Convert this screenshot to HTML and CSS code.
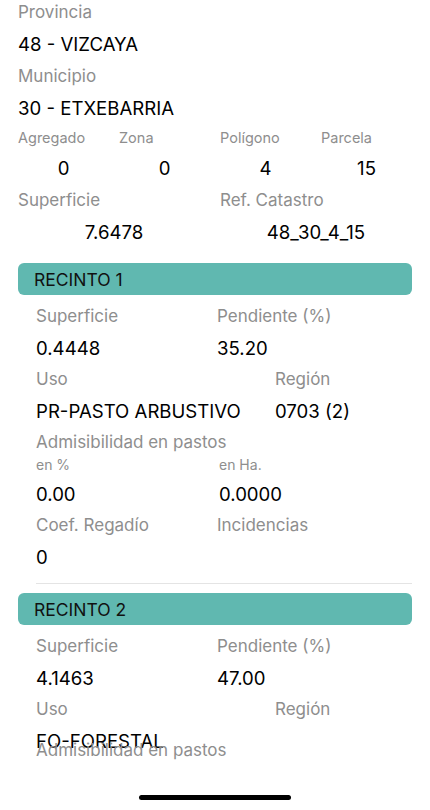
FILE: index.html
```html
<html>
  <head>
    <title>Parcela</title>
    <link rel="stylesheet" href="styles.css">
  </head>
  <body>
    <div id="screen">
      <div class="parcel">
        <p class="label">Provincia</p>
        <p class="value">48 - VIZCAYA</p>
        <p class="label">Municipio</p>
        <p class="value">30 - ETXEBARRIA</p>
        <div class="grid4">
          <p class="small">Agregado</p>
          <p class="small">Zona</p>
          <p class="small">Polígono</p>
          <p class="small">Parcela</p>
          <p class="value center">0</p>
          <p class="value center">0</p>
          <p class="value center">4</p>
          <p class="value center">15</p>
        </div>
        <div class="grid2">
          <p class="label">Superficie</p>
          <p class="label">Ref. Catastro</p>
          <p class="value center">7.6478</p>
          <p class="value center">48_30_4_15</p>
        </div>
      </div>

      <div class="recinto">
        <div class="head">RECINTO 1</div>
        <div class="body">
          <div class="pair">
            <p class="label">Superficie</p>
            <p class="label">Pendiente (%)</p>
            <p class="value">0.4448</p>
            <p class="value">35.20</p>
          </div>
          <div class="pair wide">
            <p class="label">Uso</p>
            <p class="label">Región</p>
            <p class="value">PR-PASTO ARBUSTIVO</p>
            <p class="value">0703 (2)</p>
          </div>
          <p class="label tight">Admisibilidad en pastos</p>
          <div class="pair sub">
            <p class="tiny">en %</p>
            <p class="tiny">en Ha.</p>
            <p class="value spaced">0.00</p>
            <p class="value spaced">0.0000</p>
          </div>
          <div class="pair">
            <p class="label">Coef. Regadío</p>
            <p class="label">Incidencias</p>
            <p class="value">0</p>
            <p class="value"></p>
          </div>
        </div>
        <div class="sep"></div>
      </div>

      <div class="recinto">
        <div class="head">RECINTO 2</div>
        <div class="body">
          <div class="pair">
            <p class="label">Superficie</p>
            <p class="label">Pendiente (%)</p>
            <p class="value">4.1463</p>
            <p class="value">47.00</p>
          </div>
          <div class="pair wide">
            <p class="label">Uso</p>
            <p class="label">Región</p>
            <p class="value">FO-FORESTAL</p>
            <p class="value"></p>
          </div>
          <p class="label tight overlap">Admisibilidad en pastos</p>
        </div>
      </div>

      <div class="home"></div>
    </div>
  </body>
</html>
```

FILE: styles.css
```css
body {
  margin: 0;
  background: #fff;
  font-family: Inter, "Noto Sans", sans-serif;
}
p {
  margin: 0;
}
#screen {
  position: relative;
  width: 430px;
  height: 810px;
  overflow: hidden;
}
.parcel {
  margin-top: -4px;
  padding: 0 18px;
}
.label {
  height: 32px;
  line-height: 33px;
  font-size: 17px;
  color: #8e8e8e;
  white-space: nowrap;
}
.parcel .label {
  line-height: 32px;
}
.value {
  height: 31px;
  line-height: 32px;
  font-size: 18.6px;
  color: #000;
  white-space: nowrap;
}
.parcel .value {
  height: 32px;
  line-height: 33px;
}
.small {
  height: 28px;
  line-height: 28px;
  font-size: 14.5px;
  color: #8e8e8e;
}
.tiny {
  height: 20px;
  line-height: 21px;
  font-size: 14px;
  color: #8e8e8e;
}
.center {
  text-align: center;
}
.grid4 {
  display: grid;
  grid-template-columns: repeat(4, 1fr);
  column-gap: 10px;
}
.grid2 {
  display: grid;
  grid-template-columns: 1fr 1fr;
  column-gap: 10px;
}
.recinto {
  padding: 0 18px;
}
.recinto .head {
  margin-top: 15px;
  height: 32px;
  line-height: 34px;
  padding-left: 16px;
  background: #60b8b0;
  border-radius: 6px;
  font-size: 17.5px;
  color: #111;
}
.recinto + .recinto .head {
  margin-top: 9px;
}
.recinto .body {
  padding: 5px 0 0 18px;
}
.pair {
  display: grid;
  grid-template-columns: 181px 1fr;
}
.pair.wide {
  grid-template-columns: 239px 1fr;
}
.pair.sub {
  grid-template-columns: 183px 1fr;
}
.tight {
  height: 28px;
  line-height: 33px;
}
.spaced {
  margin-top: 4px;
}
.overlap {
  margin-top: -22px;
}
.sep {
  margin: 11px 0 0 18px;
  height: 1px;
  background: #e4e4e4;
}
.home {
  position: absolute;
  left: 139px;
  bottom: 10px;
  width: 152px;
  height: 5px;
  border-radius: 3px;
  background: #000;
}
```
